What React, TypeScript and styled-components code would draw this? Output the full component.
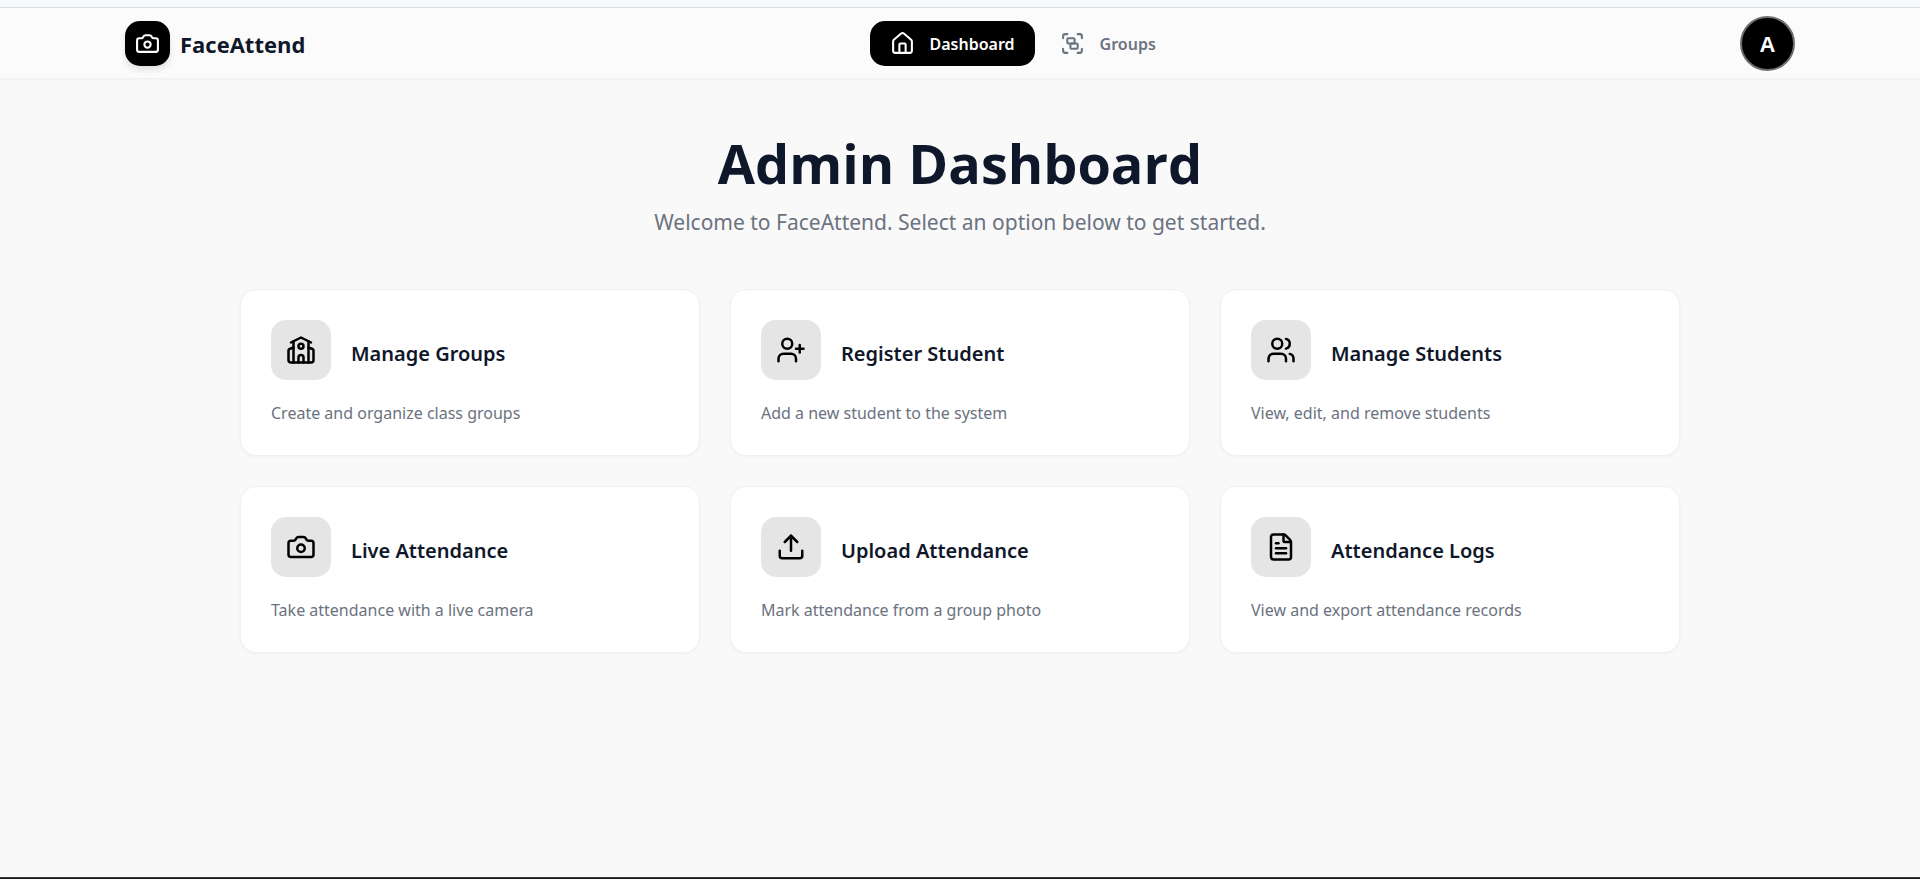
import React from 'react';
import styled, { createGlobalStyle } from 'styled-components';
import { Camera, FileText, Group, House, Upload, UserPlus, Users } from 'lucide-react';

const GlobalStyle = createGlobalStyle`
  *, *::before, *::after { box-sizing: border-box; }
  body {
    margin: 0;
    background: #f9f9f9;
    color: #0f172a;
    font-family: 'Noto Sans', 'Open Sans', sans-serif;
  }
`;

const displayFont = "'Open Sans', 'Noto Sans', sans-serif";

const Page = styled.div`
  min-height: 100vh;
  display: flex;
  flex-direction: column;
`;

const TopStrip = styled.div`
  height: 8px;
  background: #f6fafd;
  border-bottom: 1px solid #dadfe4;
`;

const Header = styled.header`
  background: #fbfbfb;
  border-bottom: 1px solid #f0f0f0;
  box-shadow: 0 1px 2px rgba(0, 0, 0, 0.04);
`;

const HeaderInner = styled.div`
  max-width: 1730px;
  margin: 0 auto;
  padding: 8px 30px 7px;
  display: flex;
  align-items: center;
  justify-content: space-between;
`;

const Brand = styled.a`
  display: flex;
  align-items: center;
  gap: 10px;
  color: #0f172a;
  font-family: ${displayFont};
  font-size: 22px;
  font-weight: 700;
  line-height: 30px;
  text-decoration: none;
`;

const BrandMark = styled.span`
  width: 45px;
  height: 45px;
  display: grid;
  place-items: center;
  border-radius: 15px;
  background: #000;
  color: #fff;
  box-shadow: 0 4px 6px rgba(0, 0, 0, 0.1);
`;

const Nav = styled.nav`
  display: flex;
  gap: 5px;
`;

const NavLink = styled.a<{ $active?: boolean }>`
  height: 45px;
  padding: 0 20px;
  display: flex;
  align-items: center;
  gap: 15px;
  border-radius: 15px;
  background: ${(p) => (p.$active ? '#000' : 'transparent')};
  color: ${(p) => (p.$active ? '#fff' : '#6b7280')};
  font-size: 16px;
  font-weight: 600;
  line-height: 25px;
  text-decoration: none;
`;

const NavLabel = styled.span`
  padding-top: 2px;
`;

const Avatar = styled.button`
  width: 55px;
  height: 55px;
  padding: 2px 0 0;
  border: 2px solid #6e6e6e;
  border-radius: 50%;
  background: #000;
  color: #fff;
  font-family: 'Liberation Sans', Arial, sans-serif;
  font-size: 22px;
  font-weight: 700;
  cursor: pointer;
`;

const Main = styled.main`
  flex: 1;
  width: 100%;
  max-width: 1500px;
  margin: 0 auto;
  padding: 54px 30px 60px;
`;

const Intro = styled.div`
  margin-bottom: 52px;
  text-align: center;
`;

const Title = styled.h1`
  margin: 0 0 14px;
  font-family: ${displayFont};
  font-size: 54px;
  font-weight: 700;
  line-height: 60px;
`;

const Subtitle = styled.p`
  margin: 0;
  color: #6b7280;
  font-size: 21px;
  line-height: 30px;
`;

const CardGrid = styled.div`
  display: grid;
  grid-template-columns: repeat(auto-fit, minmax(340px, 1fr));
  gap: 30px;
`;

const Card = styled.a`
  display: block;
  padding: 30px 30px 28px;
  border: 1px solid #f1f1f1;
  border-radius: 16px;
  background: #fff;
  box-shadow: 0 1px 3px rgba(0, 0, 0, 0.04);
  color: #0f172a;
  text-decoration: none;
`;

const CardHead = styled.div`
  display: flex;
  align-items: center;
  gap: 20px;
  margin-bottom: 20px;
`;

const IconTile = styled.span`
  width: 60px;
  height: 60px;
  display: grid;
  place-items: center;
  border-radius: 15px;
  background: #e5e5e5;
  color: #000;
`;

const CardTitle = styled.h2`
  margin: 0;
  padding-top: 8px;
  font-size: 20px;
  font-weight: 600;
  line-height: 30px;
`;

const CardText = styled.p`
  margin: 0;
  color: #6b7280;
  font-size: 16px;
  line-height: 27px;
`;

const BottomEdge = styled.footer`
  height: 2px;
  border-top: 1px solid #3a3a3c;
  background: #18181b;
`;

function SchoolIcon({ size }: { size: number }) {
  return (
    <svg
      width={size}
      height={size}
      viewBox="0 0 24 24"
      fill="none"
      stroke="currentColor"
      strokeWidth={2}
      strokeLinecap="round"
      strokeLinejoin="round"
      aria-hidden="true"
    >
      <path d="m4 6 8-4 8 4" />
      <path d="m18 10 3.2 1.2a1.2 1.2 0 0 1 .8 1.1V20a2 2 0 0 1-2 2H4a2 2 0 0 1-2-2v-7.7a1.2 1.2 0 0 1 .8-1.1L6 10" />
      <path d="M14 22v-4a2 2 0 0 0-4 0v4" />
      <path d="M18 5v17" />
      <path d="M6 5v17" />
      <circle cx="12" cy="9" r="2" />
    </svg>
  );
}

interface Option {
  icon: React.ComponentType<{ size: number }>;
  title: string;
  text: string;
}

const options: Option[] = [
  { icon: SchoolIcon, title: 'Manage Groups', text: 'Create and organize class groups' },
  { icon: UserPlus, title: 'Register Student', text: 'Add a new student to the system' },
  { icon: Users, title: 'Manage Students', text: 'View, edit, and remove students' },
  { icon: Camera, title: 'Live Attendance', text: 'Take attendance with a live camera' },
  { icon: Upload, title: 'Upload Attendance', text: 'Mark attendance from a group photo' },
  { icon: FileText, title: 'Attendance Logs', text: 'View and export attendance records' },
];

export default function App() {
  return (
    <Page>
      <GlobalStyle />
      <TopStrip />
      <Header>
        <HeaderInner>
          <Brand href="#">
            <BrandMark>
              <Camera size={25} />
            </BrandMark>
            FaceAttend
          </Brand>
          <Nav>
            <NavLink href="#dashboard" $active aria-current="page">
              <House size={25} />
              <NavLabel>Dashboard</NavLabel>
            </NavLink>
            <NavLink href="#groups">
              <Group size={25} />
              <NavLabel>Groups</NavLabel>
            </NavLink>
          </Nav>
          <Avatar type="button">A</Avatar>
        </HeaderInner>
      </Header>
      <Main>
        <Intro>
          <Title>Admin Dashboard</Title>
          <Subtitle>Welcome to FaceAttend. Select an option below to get started.</Subtitle>
        </Intro>
        <CardGrid>
          {options.map(({ icon: Icon, title, text }) => (
            <Card key={title} href="#">
              <CardHead>
                <IconTile>
                  <Icon size={30} />
                </IconTile>
                <CardTitle>{title}</CardTitle>
              </CardHead>
              <CardText>{text}</CardText>
            </Card>
          ))}
        </CardGrid>
      </Main>
      <BottomEdge />
    </Page>
  );
}
